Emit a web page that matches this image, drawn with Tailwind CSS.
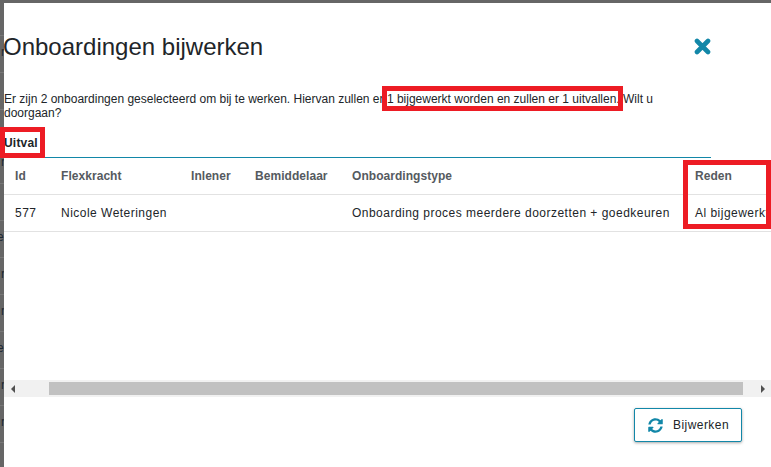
<!DOCTYPE html>
<html lang="nl">
<head>
  <meta charset="UTF-8" />
  <title>Onboardingen bijwerken</title>
  <script src="https://cdn.jsdelivr.net/npm/@tailwindcss/browser@4"></script>
</head>
<body class="relative w-[771px] h-[467px] overflow-hidden bg-[#666666] font-['Liberation_Sans',Arial,sans-serif] text-[#212529]">
  <!-- page behind the modal -->
  <div class="absolute left-0 top-[3px] w-[4px] h-[464px] overflow-hidden text-[12px] leading-[14px] text-[#1c2733]">
    <div class="absolute left-0 top-[32px] w-full h-px bg-[#777]"></div>
    <div class="absolute left-0 top-[69px] w-full h-px bg-[#777]"></div>
    <div class="absolute left-0 top-[106px] w-full h-px bg-[#777]"></div>
    <div class="absolute left-0 top-[143px] w-full h-px bg-[#777]"></div>
    <div class="absolute left-0 top-[180px] w-full h-px bg-[#777]"></div>
    <div class="absolute left-0 top-[217px] w-full h-px bg-[#777]"></div>
    <div class="absolute left-0 top-[254px] w-full h-px bg-[#777]"></div>
    <div class="absolute left-0 top-[291px] w-full h-px bg-[#777]"></div>
    <div class="absolute left-0 top-[328px] w-full h-px bg-[#777]"></div>
    <div class="absolute left-0 top-[365px] w-full h-px bg-[#777]"></div>
    <div class="absolute left-0 top-[402px] w-full h-px bg-[#777]"></div>
    <div class="absolute left-0 top-[439px] w-full h-px bg-[#777]"></div>
    <span class="absolute left-[1px] top-[42px]">r</span>
    <span class="absolute left-[1px] top-[152px]">r</span>
    <span class="absolute -left-[3px] top-[227px]">e</span>
    <span class="absolute left-[1px] top-[264px]">r</span>
    <span class="absolute left-[1px] top-[301px]">r</span>
    <span class="absolute -left-[3px] top-[338px]">e</span>
    <span class="absolute left-[1px] top-[375px]">r</span>
    <span class="absolute left-[1px] top-[412px]">r</span>
  </div>

  <!-- modal -->
  <div class="absolute left-[4px] top-[3px] w-[767px] h-[464px] bg-white flex flex-col">
    <div class="flex items-start h-[89px] pt-[29px] pr-[60px]">
      <h1 class="flex-1 -ml-[1px] text-[24px] leading-[30px] font-normal">Onboardingen bijwerken</h1>
      <svg class="mt-[6px]" width="17" height="17" viewBox="0 0 17 17"><path d="M3 3 L14 14 M14 3 L3 14" stroke="#1287a8" stroke-width="4.6" stroke-linecap="round" fill="none"/></svg>
    </div>
    <p class="text-[12px] leading-[14px] w-[680px]">Er zijn 2 onboardingen geselecteerd om bij te werken. Hiervan zullen er 1 bijgewerkt worden en zullen er 1 uitvallen. Wilt u doorgaan?</p>
    <div class="mt-[9px] h-[29px] w-[707px] border-b border-[#1287a8] text-[12px] tracking-[0.2px] font-bold leading-[28px]">Uitval</div>
    <div class="h-[222px] overflow-hidden">
      <div class="flex items-center h-[37px] border-b border-[#e2e2e2] text-[12px] tracking-[0.05px] font-bold text-[#555a60]">
        <span class="w-[57px] pl-[11px]">Id</span>
        <span class="w-[130px]">Flexkracht</span>
        <span class="w-[64px]">Inlener</span>
        <span class="w-[97px]">Bemiddelaar</span>
        <span class="w-[343px]">Onboardingstype</span>
        <span>Reden</span>
      </div>
      <div class="flex items-center h-[37px] border-b border-[#e2e2e2] text-[12px] tracking-[0.48px] whitespace-nowrap">
        <span class="w-[57px] pl-[11px]">577</span>
        <span class="w-[130px]">Nicole Weteringen</span>
        <span class="w-[64px]"></span>
        <span class="w-[97px]"></span>
        <span class="w-[343px]">Onboarding proces meerdere doorzetten + goedkeuren</span>
        <span>Al bijgewerkt</span>
      </div>
    </div>
    <!-- horizontal scrollbar -->
    <div class="flex items-center h-[17px] bg-[#f1f1f1]">
      <div class="w-[17px] flex justify-center"><div class="w-0 h-0 border-y-[4px] border-y-transparent border-r-[4px] border-r-[#505050]"></div></div>
      <div class="ml-[28px] w-[694px] h-[13px] bg-[#c1c1c1]"></div>
      <div class="ml-auto w-[17px] flex justify-center"><div class="w-0 h-0 border-y-[4px] border-y-transparent border-l-[4px] border-l-[#505050]"></div></div>
    </div>
    <div class="flex justify-end pr-[29px] pt-[11px]">
      <button class="flex items-center h-[34px] w-[108px] pl-[13px] gap-[10px] bg-white border border-[#1287a8] rounded-[2px] shadow-[0_1px_3px_rgba(0,0,0,0.35)] text-[12px] tracking-[0.45px]">
        <svg width="15" height="15" viewBox="0 0 512 512"><path fill="#1287a8" d="M370.7 133.3C339.5 104 298.9 88 255.8 88c-77.500 .1-144.300 53.200-162.800 126.900-1.300 5.400-6.100 9.200-11.700 9.200H24.100c-7.500 0-13.200-6.800-11.800-14.200C33.900 94.900 134.800 8 256 8c66.500 0 126.800 26.200 171.300 68.700L463 41C478.100 25.900 504 36.600 504 57.900V192c0 13.300-10.700 24-24 24H345.900c-21.400 0-32.100-25.900-17-41l41.800-41.700zM32 296h134.100c21.400 0 32.100 25.900 17 41l-41.800 41.800c31.300 29.300 71.800 45.300 114.900 45.200 77.400-.1 144.300-53.100 162.800-126.800 1.300-5.400 6.100-9.200 11.700-9.200h57.300c7.500 0 13.200 6.800 11.800 14.200C478.100 417.100 377.200 504 256 504c-66.500 0-126.800-26.200-171.300-68.700L49 471C33.900 486.100 8 475.400 8 454.100V320c0-13.300 10.700-24 24-24z"/></svg>
        <span>Bijwerken</span>
      </button>
    </div>
  </div>

  <!-- red annotation boxes -->
  <div class="absolute left-0 top-[127px] w-[45px] h-[31px] border-[5px] border-[#ed1c24]"></div>
  <div class="absolute left-[382px] top-[86px] w-[241px] h-[25px] border-[5px] border-[#ed1c24]"></div>
  <div class="absolute left-[683px] top-[160px] w-[88px] h-[69px] border-[5px] border-[#ed1c24]"></div>
</body>
</html>
